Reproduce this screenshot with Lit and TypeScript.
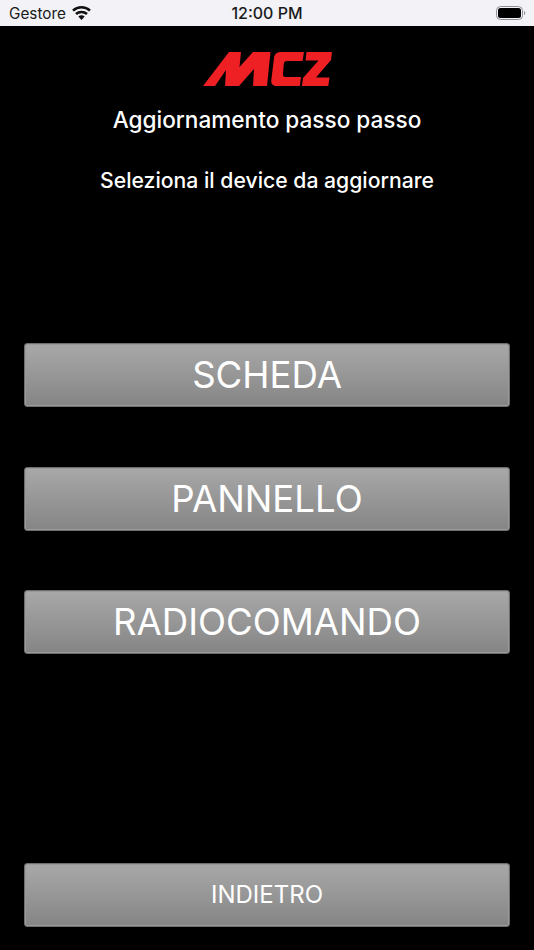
import { LitElement, html, css } from "lit";
import { customElement } from "lit/decorators.js";

@customElement("app-root")
export class AppRoot extends LitElement {
  static styles = css`
    :host { display: block; width: 534px; height: 950px; background: #000; font-family: "Inter", "Liberation Sans", sans-serif; color: #fff; overflow: hidden; }
    .status { height: 26px; background: #f2f2f7; display: grid; grid-template-columns: 1fr auto 1fr; align-items: center; color: #1a1a1a; padding: 0 8px 0 9px; box-sizing: border-box; }
    .left { display: flex; align-items: center; gap: 6px; font-size: 15.3px; }
    .time { font-size: 16px; font-weight: 500; margin-left: -1px; }
    .right { display: flex; justify-content: flex-end; }
    .body { display: flex; flex-direction: column; align-items: center; padding: 26px 24px 0; }
    .logo { display: block; }
    .title { font-size: 22.6px; font-weight: 500; margin-top: 20px; line-height: 28px; }
    .sub { font-size: 21.2px; font-weight: 500; margin-top: 32px; line-height: 28px; }
    .group { display: flex; flex-direction: column; gap: 59.7px; width: 100%; margin-top: 149px; }
    .btn { height: 64px; box-sizing: border-box; border: 1px solid #6e6e6e; border-radius: 3px; box-shadow: inset 0 0 0 1px #9a9a9a; background: linear-gradient(#a8a8a8, #858585); display: flex; align-items: center; justify-content: center; font-size: 36.6px; font-weight: 400; }
    .back { margin-top: 208.600px; width: 100%; font-size: 24px; }
  `;
  render() {
    return html`
      <div class="status">
        <div class="left"><span>Gestore</span>
          <svg width="19" height="14" viewBox="0 0 19 14"><g fill="none" stroke="#111" stroke-width="2.600"><path d="M1 4.600C5.800.2 13.200.2 18 4.600"/><path d="M4 8C7 5.300 12 5.300 15 8"/></g><path fill="#111" d="M9.500 14l3.200-3.500c-1.800-1.600-4.600-1.600-6.400 0z"/></svg>
        </div>
        <div class="time">12:00 PM</div>
        <div class="right">
          <svg width="30" height="14" viewBox="0 0 30 14"><rect x=".5" y=".5" width="26" height="13" rx="4" fill="none" stroke="#8e8e93"/><rect x="2" y="2" width="23" height="10" rx="2.500" fill="#000"/><path d="M28 5v4c.8-.3 1.200-1.100 1.200-2S28.800 5.300 28 5z" fill="#8e8e93"/></svg>
        </div>
      </div>
      <div class="body">
        <svg class="logo" width="129" height="34" viewBox="0 0 129 34"><path fill="#ee2024" d="M0 34 26 0H38L36.500 15 50 0H67.500L64 34H50L51 17 36 34H22L23 18 12 34z"/><path fill="#ee2024" d="M78 0H101L99.500 9H84C82 9 81 10 80.800 12L80 22C79.800 24 80.500 25 82.500 25H98L96.800 34H74C70 34 67.800 32 68.300 28L71 6C71.500 2 74 0 78 0z"/><path fill="#ee2024" d="M103.500 0H129L128 8 113 25.500H126.500L125.300 34H99L100 26 115.500 8.500H102.500z"/></svg>
        <div class="title">Aggiornamento passo passo</div>
        <div class="sub">Seleziona il device da aggiornare</div>
        <div class="group">
          <div class="btn">SCHEDA</div>
          <div class="btn">PANNELLO</div>
          <div class="btn">RADIOCOMANDO</div>
        </div>
        <div class="btn back">INDIETRO</div>
      </div>
    `;
  }
}
